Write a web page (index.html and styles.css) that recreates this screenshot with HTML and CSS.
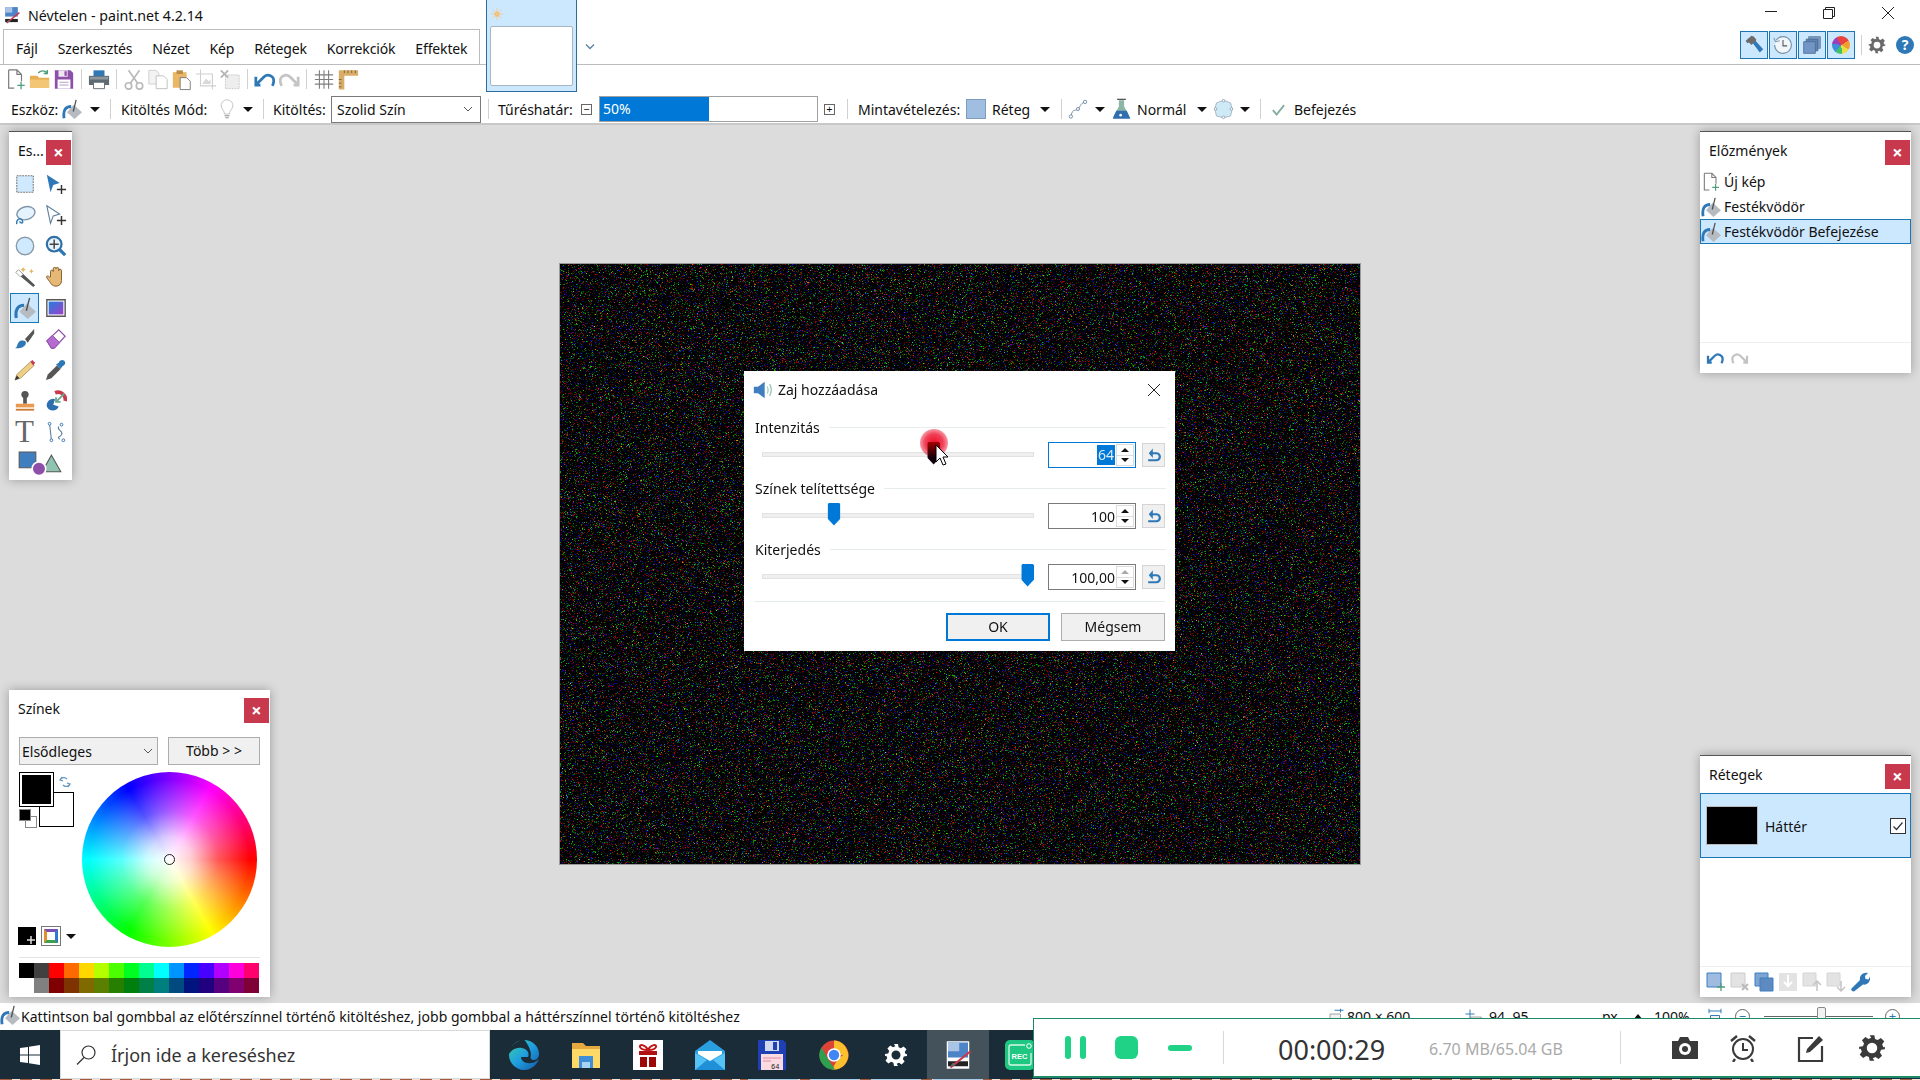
FILE: index.html
```html
<!DOCTYPE html>
<html lang="hu">
<head>
<meta charset="utf-8">
<title>Névtelen - paint.net 4.2.14</title>
<link rel="stylesheet" href="styles.css">
</head>
<body>
<svg class="defs" aria-hidden="true">
  <symbol id="i-new" viewBox="0 0 24 24"><path d="M4 1.500h9l5 5V14M13 1.500v5h5M10 21.500H4v-20" fill="#fff" stroke="#7b7b7b" stroke-width="1.300"/><path d="M17.500 14.500v8M13.500 18.500h8" stroke="#4f9d7b" stroke-width="1.400"/></symbol>
  <symbol id="i-open" viewBox="0 0 24 24"><path d="M1 8h8l2 2h11v11H1z" fill="#e8ae52"/><path d="M1 12h21v9H1z" fill="#f3c676"/><path d="M10 5c3-3 7-3 10 0M20 1.500V5.500h-4" fill="none" stroke="#4f9d7b" stroke-width="1.500"/></symbol>
  <symbol id="i-save" viewBox="0 0 24 24"><path d="M2 2h17l3 3v17H2z" fill="#8d4fa8"/><path d="M6 2h10v7H6z" fill="#efe6f3"/><path d="M12.500 3h2.500v5h-2.500z" fill="#8d4fa8"/><path d="M5 12h14v10H5z" fill="#fff"/><path d="M7 15h10M7 18h10" stroke="#b9a0c6" stroke-width="1.200"/></symbol>
  <symbol id="i-print" viewBox="0 0 24 24"><path d="M6 2h12v7H6z" fill="#2f78b7"/><path d="M1 8h22v10H1z" fill="#5f6b74"/><path d="M2 9h20v3H2z" fill="#8d979e"/><path d="M6 15h12v7H6z" fill="#fff" stroke="#5f6b74"/></symbol>
  <symbol id="i-cut" viewBox="0 0 24 24"><g fill="none" stroke="#b9b9b9" stroke-width="1.800"><circle cx="6" cy="19" r="3.500"/><circle cx="18" cy="19" r="3.500"/><path d="M8 16 18 2M16 16 6 2"/></g></symbol>
  <symbol id="i-copy" viewBox="0 0 24 24"><path d="M2 2h8l3 3v12H2z" fill="#f3f3f3" stroke="#cfcfcf"/><path d="M10 8h8l4 4v10H10z" fill="#fff" stroke="#bdbdbd"/></symbol>
  <symbol id="i-paste" viewBox="0 0 24 24"><path d="M2 4h15v17H2z" fill="#e9b765"/><path d="M6 2h7v4H6z" fill="#b98d4a"/><path d="M10 10h7l4 4v9H10z" fill="#fff" stroke="#777"/></symbol>
  <symbol id="i-crop" viewBox="0 0 24 24"><path d="M6 1v18h17M1 6h18v17" fill="none" stroke="#cfcfcf" stroke-width="1.200"/><path d="M8 17l4-6 3 3 2-2v5z" fill="#d8d8d8"/></symbol>
  <symbol id="i-desel" viewBox="0 0 24 24"><path d="M7 7h15v15H7z" fill="#eee" stroke="#c9c9c9" stroke-dasharray="2 1"/><path d="M2 2l8 8M10 2l-8 8" stroke="#b5b5b5" stroke-width="2"/></symbol>
  <symbol id="i-undo" viewBox="0 0 24 24"><path d="M7 18h-5V9M2.500 17.500 11 9c4-3.500 11-1 10.500 5-.1 1.500-.5 3-1.500 5" fill="none" stroke="#2f78b7" stroke-width="3"/></symbol>
  <symbol id="i-redo" viewBox="0 0 24 24"><path d="M17 18h5V9M21.500 17.500 13 9C9 5.500 2 8 2.500 14c.1 1.500.5 3 1.500 5" fill="none" stroke="#c4c4c4" stroke-width="3"/></symbol>
  <symbol id="i-grid" viewBox="0 0 24 24"><path d="M7 2v20M12 2v20M17 2v20M2 7h20M2 12h20M2 17h20" stroke="#7f7f7f" stroke-width="1.200"/></symbol>
  <symbol id="i-ruler" viewBox="0 0 24 24"><path d="M2 2h21v6H8v15H2z" fill="#d8ad6a"/><path d="M8 2v3M12 2v3M16 2v3M20 2v3M2 12h3M2 16h3M2 20h3" stroke="#7d6030"/></symbol>
  <symbol id="i-bucket" viewBox="0 0 24 24"><path d="M14 7l10 9-9 8-9-8z" fill="#b5bbc1"/><path d="M13.500 15 17 1" stroke="#4d4d4d" stroke-width="1.500"/><path d="M2.500 23C1 14 4 9 11 9" fill="none" stroke="#2f78b7" stroke-width="3.400"/></symbol>
  <symbol id="i-bulb" viewBox="0 0 24 24"><path d="M12 1c5 0 7 4 7 7 0 4-4 6-4 10H9c0-4-4-6-4-10 0-3 2-7 7-7z" fill="#fff" stroke="#b7b7b7"/><path d="M9 20h6M10 22.500h4" stroke="#8f8f8f" stroke-width="1.300"/></symbol>
  <symbol id="i-curve" viewBox="0 0 24 24"><path d="M4 20C5 10 10 16 13 11s3-6 7-7" fill="none" stroke="#7d94a8" stroke-width="1.200"/><g fill="#fff" stroke="#5f7f9d"><circle cx="3.500" cy="21" r="2"/><circle cx="12" cy="12" r="1.800"/><circle cx="20.500" cy="3.500" r="2"/></g></symbol>
  <symbol id="i-flask" viewBox="0 0 24 24"><path d="M9 2h6v7l7 13H2L9 9z" fill="#8cb7a6"/><path d="M6 14h12l4 9H2z" fill="#2f6fb0"/><path d="M7 1h10" stroke="#555" stroke-width="1.500"/><circle cx="11" cy="19" r="1.500" fill="#fff"/></symbol>
  <symbol id="i-blob" viewBox="0 0 24 24"><path d="M4 5 12 2l8 3 2 7-2 8-8 2-8-2-2-8z" fill="#cfeaf7" stroke="#9fb0bd"/><g fill="#fff" stroke="#8fa3b3"><circle cx="12" cy="2.500" r="1.500"/><circle cx="21" cy="12" r="1.500"/><circle cx="12" cy="21.500" r="1.500"/><circle cx="3" cy="12" r="1.500"/></g></symbol>
  <symbol id="i-check" viewBox="0 0 24 24"><path d="M3 13l6 7L21 5" fill="none" stroke="#83ab9e" stroke-width="3"/></symbol>
  <symbol id="i-hammer" viewBox="0 0 24 24"><path d="M10 9l3-3 10 11-4 4z" fill="#2f78b7"/><path d="M2 7l7-6 3 1 3 4-6 6-3-3-2 1z" fill="#6b6b6b"/></symbol>
  <symbol id="i-clock" viewBox="0 0 24 24"><path d="M4 6a10 10 0 1 1-2 6" fill="#f1f6fa" stroke="#7d94a8" stroke-width="1.500"/><path d="M1 3.500 3 8l5-1" fill="none" stroke="#7d94a8" stroke-width="1.300"/><path d="M12 6v7h5" fill="none" stroke="#555" stroke-width="1.300"/></symbol>
  <symbol id="i-layers" viewBox="0 0 24 24"><path d="M8 2h14v14H8z" fill="#7c9cc4" stroke="#5f7f9d"/><path d="M5 5h14v14H5z" fill="#5d83b5" stroke="#45698f"/><path d="M2 8h14v14H2z" fill="#7196c5" stroke="#4f6d90"/></symbol>
  <symbol id="i-gear" viewBox="0 0 24 24"><path d="M10 1h4l.6 3.200 2.300 1 2.700-1.800 2.900 2.900-1.800 2.700 1 2.300L23 11v2l-3.200.6-1 2.300 1.800 2.700-2.900 2.900-2.700-1.800-2.300 1L14 23h-4l-.6-3.200-2.300-1-2.700 1.800-2.900-2.900 1.800-2.700-1-2.300L1 13v-2l3.200-.6 1-2.300-1.800-2.700 2.900-2.900 2.700 1.800 2.300-1zM12 7.500a4.500 4.500 0 1 0 0 9 4.500 4.500 0 0 0 0-9z" fill-rule="evenodd"/></symbol>
  <symbol id="i-rect" viewBox="0 0 24 24"><path d="M3 3h18v18H3z" fill="#cfeaff" stroke="#777" stroke-dasharray="2 1" stroke-width="1.200"/></symbol>
  <symbol id="i-movepx" viewBox="0 0 24 24"><path d="M2 2l14 9-7 2-3 8z" fill="#2f78b7"/><path d="M18 13v10M13 18h10" stroke="#333" stroke-width="1.600"/></symbol>
  <symbol id="i-movesel" viewBox="0 0 24 24"><path d="M2 2l14 9-7 2-3 8z" fill="#fff" stroke="#5f7f9d" stroke-width="1.200"/><path d="M18 13v10M13 18h10" stroke="#333" stroke-width="1.600"/></symbol>
  <symbol id="i-lasso" viewBox="0 0 24 24"><ellipse cx="13" cy="10" rx="10" ry="7" fill="#e4f3fd" stroke="#7d94a8" stroke-width="1.500" transform="rotate(-15 13 10)"/><path d="M3 22c-1-5 4-8 6-4s-2 3-3 1" fill="none" stroke="#2f78b7" stroke-width="1.500"/></symbol>
  <symbol id="i-ellipse" viewBox="0 0 24 24"><circle cx="12" cy="12" r="9.500" fill="#cfeaff" stroke="#8a9aa6" stroke-width="1.500"/></symbol>
  <symbol id="i-zoom" viewBox="0 0 24 24"><path d="M15 15l7 7" stroke="#2f78b7" stroke-width="3.500"/><circle cx="10" cy="10" r="8" fill="#e4f3fd" stroke="#2f6fa5" stroke-width="2.400"/><path d="M10 5v10M5 10h10" stroke="#444" stroke-width="1.600"/></symbol>
  <symbol id="i-wand" viewBox="0 0 24 24"><path d="M2 7l3-3 18 17-2 2z" fill="#555"/><path d="M2 7l3-3 5 5-3 3z" fill="#fff" stroke="#777" stroke-width=".6"/><path d="M10 1l1 2 2 1-2 1-1 2-1-2-2-1 2-1zM19 3l.8 2 2 .8-2 .8-.8 2-.8-2-2-.8 2-.8z" fill="#e1b95f"/></symbol>
  <symbol id="i-hand" viewBox="0 0 24 24"><path d="M6 12V6a1.500 1.500 0 0 1 3 0V3a1.500 1.500 0 0 1 3 0v0a1.500 1.500 0 0 1 3 0v2a1.500 1.500 0 0 1 3 0v11c0 4-3 6-6 6-4 0-5-2-7-5l-3-4c-1-2 1-3 3-1z" fill="#e6b878" stroke="#7d5a28"/></symbol>
  <symbol id="i-grad" viewBox="0 0 24 24"><defs><linearGradient id="gr1" x1="0" x2="1" y1="0" y2="1"><stop offset="0" stop-color="#1f7fe0"/><stop offset="1" stop-color="#a03fc8"/></linearGradient></defs><path d="M2 3h20v18H2z" fill="#fff" stroke="#555" stroke-width="1.500"/><path d="M4 5h16v14H4z" fill="url(#gr1)"/></symbol>
  <symbol id="i-brush" viewBox="0 0 24 24"><path d="M12 12 22 1v5l-7 10z" fill="#555"/><path d="M1 22c3 0 2-6 6-8 3-1 6 0 6 2 0 4-6 7-12 6z" fill="#2f78b7"/></symbol>
  <symbol id="i-eraser" viewBox="0 0 24 24"><path d="M2 14 15 2l7 7-12 13H7z" fill="#fff" stroke="#8d4fa8" stroke-width="1.300"/><path d="M2 14l6-6 8 8-6 6H7z" fill="#b66bd0" stroke="#8d4fa8"/></symbol>
  <symbol id="i-pencil" viewBox="0 0 24 24"><path d="M1 23l2-6L18 3l4 4L7 21z" fill="#f0cf85" stroke="#8a7a55" stroke-width=".7"/><path d="M18 3l2-2 3 3-2 3z" fill="#c8394e"/><path d="M1 23l2-5 3 3z" fill="#333"/></symbol>
  <symbol id="i-dropper" viewBox="0 0 24 24"><path d="M1 23l2-6 10-10 4 4L7 21z" fill="#555"/><path d="M12 6l3-2c1-3 4-4 6-2s1 5-2 6l-2 3z" fill="#2f78b7"/></symbol>
  <symbol id="i-stamp" viewBox="0 0 24 24"><circle cx="12" cy="5" r="4" fill="#555"/><path d="M10 8h4v7h-4z" fill="#555"/><path d="M2 15h20v4H2z" fill="#e89a4f"/><path d="M2 20.500h20v2H2z" fill="#c97a35"/></symbol>
  <symbol id="i-recolor" viewBox="0 0 24 24"><path d="M11 3a8 8 0 0 1 11 9" fill="none" stroke="#c8394e" stroke-width="4"/><path d="M2 18a7 7 0 0 1 9-8l-2 6 6 2a7 7 0 0 1-13 0z" fill="#2f6fb0"/><path d="M21 4 12 13M12 8v5h5" fill="none" stroke="#6aa88f" stroke-width="2"/></symbol>
  <symbol id="i-line" viewBox="0 0 24 24"><path d="M5 3l2 18M15 6c-3 4 6 5 3 9s-5 1-2 5" fill="none" stroke="#5f7f9d" stroke-width="1.200"/><g fill="#fff" stroke="#2f6fb0"><circle cx="5" cy="3" r="1.500"/><circle cx="7" cy="21" r="1.500"/><circle cx="18" cy="4" r="1.500"/><circle cx="20" cy="21" r="1.500"/></g></symbol>
  <symbol id="i-shapes" viewBox="0 0 42 24"><path d="M1 1h16v15H1z" fill="#3f7fc0" stroke="#555"/><path d="M32 4l9 16H23z" fill="#8fc4b0" stroke="#555"/><circle cx="20" cy="17" r="6.500" fill="#8d4fa8" stroke="#fff" stroke-width="1.500"/></symbol>
  <symbol id="i-speaker" viewBox="0 0 24 24"><path d="M1 8h5l8-6v20l-8-6H1z" fill="#3f7fc0"/><path d="M17 8c1.500 2 1.500 6 0 8" fill="none" stroke="#9cc" stroke-width="1.500"/><path d="M20 5c2.500 4 2.500 10 0 14" fill="none" stroke="#8fc4b0" stroke-width="1.500"/></symbol>
  <symbol id="i-reset" viewBox="0 0 24 24"><path d="M2 21h14a6 6 0 0 0 0-12H8" fill="none" stroke="#2f78b7" stroke-width="3.800"/><path d="M10 1 3 9l7 8z" fill="#2f78b7"/></symbol>
  <symbol id="i-fit" viewBox="0 0 24 24"><path d="M4 1v6M20 1v6M4 4l16 0M6 10h12v12H6z" fill="#f2f2f2" stroke="#2f78b7" stroke-width="1.300"/></symbol>
  <symbol id="i-size" viewBox="0 0 24 24"><path d="M4 8h14v15H4z" fill="#f2f2f2" stroke="#888"/><path d="M10 3h12M18 1v5" stroke="#2f78b7" stroke-width="1.300"/></symbol>
  <symbol id="i-pos" viewBox="0 0 24 24"><path d="M9 12h14v12H9z" fill="#f2f2f2" stroke="#888"/><path d="M8 2v12M2 8h12" stroke="#2f78b7" stroke-width="1.300"/></symbol>
  <symbol id="i-thumbpn" viewBox="0 0 24 24"><path d="M3 1h18v22H3z" fill="#fff"/><path d="M4 2h16v12H4z" fill="#4d83c7"/><path d="M4 2h9v7H4z" fill="#a9c4e4"/><path d="M4 17h16v4H4z" fill="#222"/><path d="M6 22 22 9" stroke="#c8394e" stroke-width="1.800"/><path d="M5 22l3-4 2 2z" fill="#666"/></symbol>
</svg>

<div class="app">
  <header class="top">
    <div class="top-left">
      <div class="titlerow">
        <svg class="title-ico"><use href="#i-thumbpn"/></svg>
        <span class="title-text">Névtelen - paint.net 4.2.14</span>
      </div>
      <nav class="tab">
        <span class="menu-item">Fájl</span>
        <span class="menu-item">Szerkesztés</span>
        <span class="menu-item">Nézet</span>
        <span class="menu-item">Kép</span>
        <span class="menu-item">Rétegek</span>
        <span class="menu-item">Korrekciók</span>
        <span class="menu-item">Effektek</span>
      </nav>
    </div>
    <div class="doc-thumb">
      <svg class="doc-sun" viewBox="0 0 14 14"><circle cx="7" cy="7" r="3" fill="#f3b562"/><path d="M7 0v14M0 7h14M2 2l10 10M12 2 2 12" stroke="#f3c98c" stroke-width="1"/></svg>
      <div class="doc-page"></div>
    </div>
    <svg class="doc-chev" viewBox="0 0 10 8"><path d="M1 1.500l4 4 4-4" fill="none" stroke="#5f7f9d" stroke-width="1.300"/></svg>
    <div class="top-right">
      <div class="winctl">
        <span class="winbtn"><svg viewBox="0 0 14 14"><path d="M1 5.500h12" stroke="#222"/></svg></span>
        <span class="winbtn"><svg viewBox="0 0 14 14"><path d="M1.500 3.500h9v9h-9zM3.500 3.500v-2h9v9h-2" fill="none" stroke="#222"/></svg></span>
        <span class="winbtn"><svg viewBox="0 0 14 14"><path d="M1 1l12 12M13 1 1 13" stroke="#222"/></svg></span>
      </div>
      <div class="dockrow">
        <span class="dockbtn"><svg class="ico20"><use href="#i-hammer"/></svg></span>
        <span class="dockbtn"><svg class="ico20"><use href="#i-clock"/></svg></span>
        <span class="dockbtn"><svg class="ico20"><use href="#i-layers"/></svg></span>
        <span class="dockbtn"><span class="mini-wheel"></span></span>
        <span class="sep dock-sep"></span>
        <svg class="gear-top"><use href="#i-gear"/></svg>
        <span class="help">?</span>
      </div>
    </div>
  </header>

  <div class="tb1">
    <svg class="tbi"><use href="#i-new"/></svg>
    <svg class="tbi"><use href="#i-open"/></svg>
    <svg class="tbi"><use href="#i-save"/></svg>
    <span class="sep"></span>
    <svg class="tbi"><use href="#i-print"/></svg>
    <span class="sep"></span>
    <svg class="tbi"><use href="#i-cut"/></svg>
    <svg class="tbi"><use href="#i-copy"/></svg>
    <svg class="tbi"><use href="#i-paste"/></svg>
    <svg class="tbi"><use href="#i-crop"/></svg>
    <svg class="tbi"><use href="#i-desel"/></svg>
    <span class="sep"></span>
    <svg class="tbi"><use href="#i-undo"/></svg>
    <svg class="tbi"><use href="#i-redo"/></svg>
    <span class="sep"></span>
    <svg class="tbi"><use href="#i-grid"/></svg>
    <svg class="tbi"><use href="#i-ruler"/></svg>
  </div>

  <div class="tb2">
    <span class="lb w51">Eszköz:</span>
    <svg class="opt"><use href="#i-bucket"/></svg>
    <span class="caret c8"></span>
    <span class="sep s10"></span>
    <span class="lb w96">Kitöltés Mód:</span>
    <svg class="opt"><use href="#i-bulb"/></svg>
    <span class="caret c6"></span>
    <span class="sep s9"></span>
    <span class="lb w58">Kitöltés:</span>
    <span class="combo">Szolid Szín<svg class="chev" viewBox="0 0 10 6"><path d="M1 1l4 4 4-4" fill="none" stroke="#555"/></svg></span>
    <span class="sep s7"></span>
    <span class="lb w83">Tűréshatár:</span>
    <span class="pm">−</span>
    <span class="tol"><span class="tol-fill">50%</span></span>
    <span class="pm pm2">+</span>
    <span class="sep s12"></span>
    <span class="lb w108">Mintavételezés:</span>
    <span class="swatch"></span>
    <span class="lb w45">Réteg</span>
    <span class="caret c3"></span>
    <span class="sep s11"></span>
    <svg class="opt"><use href="#i-curve"/></svg>
    <span class="caret c7"></span>
    <svg class="opt o6"><use href="#i-flask"/></svg>
    <span class="lb w57">Normál</span>
    <span class="caret c3"></span>
    <svg class="opt o6"><use href="#i-blob"/></svg>
    <span class="caret c1"></span>
    <span class="sep s10"></span>
    <svg class="chk"><use href="#i-check"/></svg>
    <span class="lb">Befejezés</span>
  </div>

  <main class="workspace">
    <canvas id="noise" class="doc" width="800" height="600"></canvas>

    <section class="win win-tools">
      <div class="win-head"><span class="win-title">Es...</span><span class="x">×</span></div>
      <div class="tools">
        <span class="tool"><svg class="ti"><use href="#i-rect"/></svg></span>
        <span class="tool"><svg class="ti"><use href="#i-movepx"/></svg></span>
        <span class="tool"><svg class="ti"><use href="#i-lasso"/></svg></span>
        <span class="tool"><svg class="ti"><use href="#i-movesel"/></svg></span>
        <span class="tool"><svg class="ti"><use href="#i-ellipse"/></svg></span>
        <span class="tool"><svg class="ti"><use href="#i-zoom"/></svg></span>
        <span class="tool"><svg class="ti"><use href="#i-wand"/></svg></span>
        <span class="tool"><svg class="ti"><use href="#i-hand"/></svg></span>
        <span class="tool tool-on"><svg class="ti"><use href="#i-bucket"/></svg></span>
        <span class="tool"><svg class="ti"><use href="#i-grad"/></svg></span>
        <span class="tool"><svg class="ti"><use href="#i-brush"/></svg></span>
        <span class="tool"><svg class="ti"><use href="#i-eraser"/></svg></span>
        <span class="tool"><svg class="ti"><use href="#i-pencil"/></svg></span>
        <span class="tool"><svg class="ti"><use href="#i-dropper"/></svg></span>
        <span class="tool"><svg class="ti"><use href="#i-stamp"/></svg></span>
        <span class="tool"><svg class="ti"><use href="#i-recolor"/></svg></span>
        <span class="tool tool-t">T</span>
        <span class="tool"><svg class="ti"><use href="#i-line"/></svg></span>
        <span class="tool tool-wide"><svg class="ti-wide"><use href="#i-shapes"/></svg></span>
      </div>
    </section>

    <section class="win win-colors">
      <div class="win-head head-c"><span class="win-title">Színek</span><span class="x">×</span></div>
      <div class="col-ctl">
        <span class="col-combo">Elsődleges<svg class="chev" viewBox="0 0 10 6"><path d="M1 1l4 4 4-4" fill="none" stroke="#555"/></svg></span>
        <span class="col-more">Több &gt; &gt;</span>
      </div>
      <div class="col-body">
        <div class="col-left">
          <div class="sw-stack">
            <span class="sw-bg"></span>
            <span class="sw-fg"></span>
            <svg class="sw-swap" viewBox="0 0 12 12"><path d="M1 4c2-3 5-3 7-1M3 1 1 4l3 1M11 8c-2 3-5 3-7 1M9 11l2-3-3-1" fill="none" stroke="#5f93bd" stroke-width="1.300"/></svg>
            <span class="sw-r1"></span>
            <span class="sw-r2"></span>
          </div>
          <div class="col-tools">
            <span class="add-col"><svg viewBox="0 0 10 10"><path d="M5 1v8M1 5h8" stroke="#ddd" stroke-width="1.500"/></svg></span>
            <span class="pal-btn"><span class="pal-in"></span></span>
            <span class="caret"></span>
          </div>
        </div>
        <div class="wheel"><span class="wheel-cur"></span></div>
      </div>
      <div class="palette">
        <i style="background:#000"></i><i style="background:#404040"></i><i style="background:#f00"></i><i style="background:#ff6a00"></i><i style="background:#ffd800"></i><i style="background:#b6ff00"></i><i style="background:#4cff00"></i><i style="background:#00ff21"></i><i style="background:#00ff90"></i><i style="background:#0ff"></i><i style="background:#0094ff"></i><i style="background:#0026ff"></i><i style="background:#4800ff"></i><i style="background:#b200ff"></i><i style="background:#ff00dc"></i><i style="background:#ff006e"></i>
        <i style="background:#fff"></i><i style="background:#808080"></i><i style="background:#7f0000"></i><i style="background:#7f3300"></i><i style="background:#7f6a00"></i><i style="background:#5b7f00"></i><i style="background:#267f00"></i><i style="background:#007f0e"></i><i style="background:#007f46"></i><i style="background:#007f7f"></i><i style="background:#004a7f"></i><i style="background:#00137f"></i><i style="background:#21007f"></i><i style="background:#57007f"></i><i style="background:#7f006e"></i><i style="background:#7f0037"></i>
      </div>
    </section>

    <section class="win win-hist">
      <div class="win-head head-r"><span class="win-title">Előzmények</span><span class="x">×</span></div>
      <div class="list">
        <div class="hrow"><svg class="hi"><use href="#i-new"/></svg>Új kép</div>
        <div class="hrow"><svg class="hi"><use href="#i-bucket"/></svg>Festékvödör</div>
        <div class="hrow hrow-on"><svg class="hi"><use href="#i-bucket"/></svg>Festékvödör Befejezése</div>
      </div>
      <div class="foot">
        <svg class="fi"><use href="#i-undo"/></svg>
        <svg class="fi"><use href="#i-redo"/></svg>
      </div>
    </section>

    <section class="win win-layers">
      <div class="win-head head-r"><span class="win-title">Rétegek</span><span class="x">×</span></div>
      <div class="list">
        <div class="lrow"><span class="lthumb"></span><span class="lname">Háttér</span>
          <span class="lchk"><svg viewBox="0 0 14 14"><path d="M2.500 7.500l3 3 6-7" fill="none" stroke="#333" stroke-width="1.200"/></svg></span></div>
      </div>
      <div class="foot foot-l">
        <svg class="fl" viewBox="0 0 20 20"><path d="M1 1h14v14H1z" fill="#9fbbdf" stroke="#3f7fc0"/><path d="M15 11v8M11 15h8" stroke="#4f9d7b" stroke-width="1.300"/></svg>
        <svg class="fl" viewBox="0 0 20 20"><path d="M1 1h14v14H1z" fill="#e3e3e3" stroke="#ccc"/><path d="M12 12l6 6M18 12l-6 6" stroke="#bbb" stroke-width="2"/></svg>
        <svg class="fl" viewBox="0 0 20 20"><path d="M1 1h13v13H1z" fill="#7ea4d2" stroke="#3f7fc0"/><path d="M6 6h13v13H6z" fill="#5d8ac0" stroke="#3f7fc0"/></svg>
        <svg class="fl" viewBox="0 0 20 20"><path d="M1 1h18v18H1z" fill="#e3e3e3"/><path d="M10 3v11M6 10l4 4 4-4" fill="none" stroke="#fff" stroke-width="2"/></svg>
        <svg class="fl" viewBox="0 0 20 20"><path d="M1 1h13v13H1z" fill="#e3e3e3" stroke="#d5d5d5"/><path d="M15 19V10M11 13l4-4 4 4" fill="none" stroke="#c4c4c4" stroke-width="1.500"/></svg>
        <svg class="fl" viewBox="0 0 20 20"><path d="M1 1h13v13H1z" fill="#e3e3e3" stroke="#d5d5d5"/><path d="M15 9v9M11 15l4 4 4-4" fill="none" stroke="#c4c4c4" stroke-width="1.500"/></svg>
        <svg class="fl" viewBox="0 0 20 20"><path d="M2 19l-1-2 9-9c-1-4 3-8 8-7l-3 3 .5 3 3 .5 1.500-3c1 5-3 9-7 8l-9 7z" fill="#2f78b7"/></svg>
      </div>
    </section>

    <section class="dialog">
      <div class="dlg-head">
        <svg class="dlg-ico"><use href="#i-speaker"/></svg>
        <span class="dlg-title">Zaj hozzáadása</span>
        <svg class="dlg-x" viewBox="0 0 12 12"><path d="M0 0l12 12M12 0 0 12" stroke="#222"/></svg>
      </div>

      <div class="grp">
        <div class="grp-label"><span>Intenzitás</span></div>
        <div class="grp-ctl">
          <div class="track">
            <span class="thumb thumb-hot" style="left:63.2%"></span>
            <span class="glow" style="left:63.2%"></span>
            <svg class="cursor" viewBox="0 0 14 22"><path d="M1 1v17l4-4 3 7 3-1-3-7h5z" fill="#fff" stroke="#000"/></svg>
          </div>
          <div class="spin spin-on"><span class="val sel">64</span><span class="arrows"><b class="up"></b><b class="dn"></b></span></div>
          <span class="reset"><svg><use href="#i-reset"/></svg></span>
        </div>
      </div>

      <div class="grp">
        <div class="grp-label"><span>Színek telítettsége</span></div>
        <div class="grp-ctl">
          <div class="track"><span class="thumb" style="left:26.3%"></span></div>
          <div class="spin"><span class="val">100</span><span class="arrows"><b class="up"></b><b class="dn"></b></span></div>
          <span class="reset"><svg><use href="#i-reset"/></svg></span>
        </div>
      </div>

      <div class="grp">
        <div class="grp-label"><span>Kiterjedés</span></div>
        <div class="grp-ctl">
          <div class="track"><span class="thumb" style="left:98%"></span></div>
          <div class="spin"><span class="val">100,00</span><span class="arrows"><b class="up up-off"></b><b class="dn"></b></span></div>
          <span class="reset"><svg><use href="#i-reset"/></svg></span>
        </div>
      </div>

      <div class="dlg-foot">
        <span class="btn btn-ok">OK</span>
        <span class="btn">Mégsem</span>
      </div>
    </section>
  </main>

  <footer class="status">
    <svg class="st-ico"><use href="#i-bucket"/></svg>
    <span class="st-text">Kattintson bal gombbal az előtérszínnel történő kitöltéshez, jobb gombbal a háttérszínnel történő kitöltéshez</span>
    <div class="st-right">
      <svg class="st-i"><use href="#i-size"/></svg><span class="st-v w-size">800 × 600</span>
      <svg class="st-i"><use href="#i-pos"/></svg><span class="st-v w-pos">94, 95</span>
      <span class="st-v w-px">px</span><span class="st-up"></span><span class="st-v w-pct">100%</span>
      <svg class="st-i"><use href="#i-fit"/></svg>
      <span class="zm">−</span>
      <span class="zslider"><span class="zthumb"></span></span>
      <span class="zm">+</span>
    </div>
  </footer>

  <div class="taskbar">
    <span class="start"><svg viewBox="0 0 20 20"><path d="M0 3l8-1v7.500H0zM9 1.800 20 0v9.500H9zM0 10.500h8V18l-8-1zM9 10.500h11V20L9 18.200z" fill="#fff"/></svg></span>
    <div class="search">
      <svg viewBox="0 0 20 20"><circle cx="12.500" cy="7.500" r="6.500" fill="none" stroke="#333" stroke-width="1.200"/><path d="M8 12.500 1 19.500" stroke="#333" stroke-width="1.300"/></svg>
      <span>Írjon ide a kereséshez</span>
    </div>
    <div class="apps">
      <span class="app-cell"><svg viewBox="0 0 30 30"><defs><linearGradient id="edg" x1="0" x2="1" y1="0" y2="1"><stop offset="0" stop-color="#3ad0a0"/><stop offset=".5" stop-color="#1f9fe0"/><stop offset="1" stop-color="#1359a8"/></linearGradient></defs><path d="M15 0C7 0 1 6 0 14c3-5 8-7 13-6 5 1 8 5 6 9h-7c0 4 5 7 10 6 3 0 6-2 8-4-2 5-7 11-15 11C7 30 0 23 0 15 0 7 7 0 15 0c8 0 15 6 15 14 0 3-2 6-5 6-3 0-4-2-3-5 0-7-6-15-7-15z" fill="url(#edg)"/></svg></span>
      <span class="app-cell"><svg viewBox="0 0 30 30"><path d="M1 3h11l3 3h14v22H1z" fill="#e5a93f"/><path d="M1 9h28v19H1z" fill="#ffd968"/><path d="M8 16h14v12H8z" fill="#3f8ed8"/><path d="M11 22h8v6h-8z" fill="#a9d3f5"/></svg></span>
      <span class="app-cell"><svg viewBox="0 0 30 30"><path d="M0 0h30v30H0z" fill="#fff"/><path d="M6 11h18v4H6z" fill="#b01212"/><path d="M7 17h7v10H7zM16 17h7v10h-7z" fill="#9c0808"/><path d="M15 10c-3-6-9-6-8-3s5 3 8 3c3 0 7 0 8-3s-5-3-8 3z" fill="none" stroke="#c01818" stroke-width="2"/></svg></span>
      <span class="app-cell"><svg viewBox="0 0 30 30"><path d="M0 11 15 0l15 11v19H0z" fill="#2a9fe0"/><path d="M3 11h24v3L15 21 3 14z" fill="#fff"/><path d="M0 13l15 9 15-9v17H0z" fill="#55c3f5"/><path d="M0 30l12-10 3 2 3-2 12 10z" fill="#1f8fd8"/></svg></span>
      <span class="app-cell"><svg viewBox="0 0 30 30"><path d="M1 0h25l3 3v27H1z" fill="#1f3fb5"/><path d="M8 1h14v10H8z" fill="#cfd8ee"/><path d="M16 2h4v8h-4z" fill="#1f3fb5"/><path d="M4 14h22v16H4z" fill="#fbdbe2"/><path d="M6 18h18M6 21h8" stroke="#e58aa0"/><text x="14" y="29" font-size="7" font-family="Liberation Mono" fill="#222">64</text></svg></span>
      <span class="app-cell"><svg viewBox="0 0 30 30"><circle cx="15" cy="15" r="14.500" fill="#db4437"/><path d="M15 .5A14.500 14.500 0 0 1 29 15H15z" fill="#fbc02d"/><path d="M29 12A14.500 14.500 0 0 1 13 29.500l6-11z" fill="#fbc02d"/><path d="M2.500 7.500 9 19l7 10.500A14.500 14.500 0 0 1 2.500 7.500z" fill="#2e9e4f"/><circle cx="15" cy="15" r="6.800" fill="#fff"/><circle cx="15" cy="15" r="5.200" fill="#4285f4"/></svg></span>
      <span class="app-cell"><svg class="app-gear"><use href="#i-gear"/></svg></span>
      <span class="app-cell app-on"><svg><use href="#i-thumbpn"/></svg></span>
      <span class="app-cell"><svg viewBox="0 0 30 30"><rect width="30" height="30" rx="5" fill="#1fc882"/><path d="M20 5H6a2 2 0 0 0-2 2v16a2 2 0 0 0 2 2h18a2 2 0 0 0 2-2V13" fill="none" stroke="#d7f7e8" stroke-width="1.300"/><circle cx="24" cy="6" r="2.300" fill="none" stroke="#fff"/><text x="6.500" y="19" font-size="7.500" font-weight="700" font-family="Liberation Sans" fill="#fff">REC</text></svg></span>
    </div>
  </div>
  <div class="strip"><span class="lit l1"></span><span class="lit l2"></span><span class="lit l3"></span><span class="lit l4"></span></div>

  <aside class="recorder">
    <span class="rbar"></span><span class="rbar rbar2"></span>
    <span class="rstop"></span>
    <span class="rmin"></span>
    <span class="rsep"></span>
    <span class="rtime">00:00:29</span>
    <span class="rsize">6.70 MB/65.04 GB</span>
    <span class="rsep rsep2"></span>
    <svg class="ric" viewBox="0 0 28 28"><path d="M1 7h6l2-4h8l2 4h8v18H1z" fill="#3a3a3a"/><circle cx="14" cy="15" r="6" fill="#fff"/><circle cx="14" cy="15" r="3" fill="#3a3a3a"/></svg>
    <svg class="ric r2" viewBox="0 0 28 28"><circle cx="14" cy="15" r="10" fill="none" stroke="#3a3a3a" stroke-width="2"/><path d="M14 9v7h5" fill="none" stroke="#3a3a3a" stroke-width="2"/><path d="M2 7l6-5M26 7l-6-5M6 25l-2 3M22 25l2 3" stroke="#3a3a3a" stroke-width="2.400"/></svg>
    <svg class="ric r3" viewBox="0 0 28 28"><path d="M16 4H2v23h23V12" fill="none" stroke="#3a3a3a" stroke-width="2.200"/><path d="M10 15 22 2l4 4-13 12-4 1z" fill="#3a3a3a"/></svg>
    <svg class="ric r4"><use href="#i-gear"/></svg>
  </aside>
</div>
<script src="noise.js"></script>
</body>
</html>
```

FILE: styles.css
```css
* { box-sizing: border-box; }
html, body { margin: 0; padding: 0; }
body { font-family: "Noto Sans", "Open Sans", sans-serif; font-size: 14px; color: #111; background: #fff; }
.defs { position: absolute; width: 0; height: 0; }
svg { display: block; flex: none; }

.app { position: relative; width: 1920px; height: 1080px; display: flex; flex-direction: column; overflow: hidden; background: #fff; }

/* top */
.top { display: flex; height: 65px; flex: none; border-bottom: 1px solid #bcbcbc; }
.top-left { width: 480px; display: flex; flex-direction: column; }
.titlerow { height: 29px; display: flex; align-items: center; padding: 2px 0 0 2px; gap: 7px; }
.title-ico { width: 19px; height: 22px; }
.title-text { font-size: 14.2px; }
.tab { position: relative; z-index: 2; height: 36px; margin-left: 3px; padding: 3px 0 0 2px; background: #fff; border: 1px solid #bcbcbc; border-bottom: 0; display: flex; align-items: center; }
.menu-item { padding: 0 10px; letter-spacing: -.15px; }
.doc-thumb { position: relative; z-index: 3; width: 91px; height: 92px; margin-left: 6px; flex: none; background: #cce8ff; border: 1px solid #2b6e9e; border-top: 0; padding: 8px 3px 0; }
.doc-sun { width: 12px; height: 12px; margin-left: 1px; }
.doc-page { height: 60px; margin-top: 6px; background: #fff; border: 1px solid #a9b6c0; border-radius: 2px; }
.doc-chev { width: 10px; height: 8px; margin: 43px 0 0 8px; }
.top-right { margin-left: auto; padding-right: 3px; display: flex; flex-direction: column; }
.winctl { height: 29px; display: flex; justify-content: flex-end; }
.winbtn { width: 58.5px; display: flex; align-items: center; justify-content: center; padding-bottom: 3px; }
.winbtn svg { width: 14px; height: 14px; }
.dockrow { display: flex; align-items: center; gap: 1px; margin-top: 2px; height: 28px; padding-right: 3px; justify-content: flex-end; }
.dockbtn { width: 28px; height: 28px; background: #cce8ff; border: 1px solid #1a76b4; display: flex; align-items: center; justify-content: center; }
.ico20 { width: 20px; height: 20px; }
.mini-wheel { width: 18px; height: 18px; border-radius: 50%; background: conic-gradient(#e8433f 0 60deg, #f0a030 60deg 120deg, #e8e040 120deg 170deg, #40c070 170deg 220deg, #3f8ed8 220deg 280deg, #9a3fc0 280deg 330deg, #e8433f 330deg); }
.dock-sep { margin: 0 7px 0 1px; height: 23px; }
.gear-top { width: 18px; height: 18px; fill: #6a6a6a; margin-right: 9px; }
.help { width: 18px; height: 18px; border-radius: 50%; background: #2f78b7; color: #fff; font-weight: 700; font-size: 14px; line-height: 18px; text-align: center; }

/* toolbars */
.sep { display: block; flex: none; width: 1px; height: 20px; background: #d0d0d0; margin: 0 5px; }
.tb1 { height: 28px; flex: none; display: flex; align-items: center; padding-left: 4px; }
.tbi { width: 24px; height: 23px; padding: 0 1px; }
.tb2 { height: 32px; flex: none; display: flex; align-items: center; padding: 2px 0 0 11px; border-bottom: 2px solid #c8c8c8; }
.lb { flex: none; white-space: nowrap; }
.opt { width: 20px; height: 22px; }
.caret { width: 0; height: 0; border: 5px solid transparent; border-top: 5px solid #111; border-bottom: 0; flex: none; }
.c8 { margin-left: 8px; }
.c7 { margin-left: 7px; }
.c6 { margin-left: 6px; }
.c3 { margin-left: 3px; }
.c1 { margin-left: 1px; }
.s10 { margin: 0 10px; }
.s9 { margin: 0 9px 0 10px; }
.s7 { margin: 0 9px 0 7px; }
.s12 { margin: 0 10px 0 12px; }
.s11 { margin: 0 6px 0 11px; }
.o6 { margin-left: 6px; margin-right: 5px; width: 21px; }
.w51 { width: 51px; }
.w96 { width: 96px; }
.w58 { width: 58px; }
.w83 { width: 83px; }
.w108 { width: 108px; }
.w45 { width: 45px; margin-left: 6px; }
.w57 { width: 57px; }
.combo { width: 150px; height: 27px; border: 1px solid #7a7a7a; padding: 0 5px; display: flex; align-items: center; justify-content: space-between; }
.chev { width: 10px; height: 6px; margin-right: 2px; }
.pm { width: 11px; height: 11px; border: 1px solid #666; font-size: 11px; line-height: 8px; text-align: center; flex: none; margin-right: 7px; }
.pm2 { margin: 0 0 0 6px; }
.tol { width: 219px; height: 26px; border: 1px solid #a0a0a0; flex: none; background: #fff; }
.tol-fill { display: block; width: 109px; height: 100%; background: #0078d7; color: #fff; padding-left: 3px; line-height: 24px; }
.swatch { width: 20px; height: 20px; background: #a0bfe0; border: 1px solid #7d9cc0; flex: none; }
.chk { width: 15px; height: 15px; margin-right: 8px; }

/* workspace */
.workspace { position: relative; flex: 1; background: #dcdcdc; display: flex; align-items: center; justify-content: center; min-height: 0; }
.doc { display: block; width: 800px; height: 600px; outline: 1px solid #999; background: #000; }

.win { position: absolute; background: #fff; box-shadow: 0 0 10px rgba(0,0,0,.3); display: flex; flex-direction: column; }
.win-tools { left: 9px; top: 6px; width: 63px; height: 349px; border-top: 1px solid #555; }
.win-colors { left: 9px; top: 565px; width: 261px; height: 307px; }
.win-hist { left: 1700px; top: 6px; width: 211px; height: 242px; border-top: 1px solid #555; }
.win-layers { left: 1700px; top: 630px; width: 211px; height: 242px; border-top: 1px solid #555; }
.win-head { height: 36px; flex: none; display: flex; align-items: flex-start; justify-content: space-between; padding: 8px 1px 0 9px; }
.head-c { height: 47px; }
.head-r { height: 37px; }
.win-title { line-height: 24px; font-size: 14px; margin-top: -1px; }
.x { width: 25px; height: 25px; background: #c8394e; color: #fff; font-weight: 700; font-size: 18px; line-height: 24px; text-align: center; flex: none; }

.tools { display: grid; grid-template-columns: 31px 31px; grid-auto-rows: 31px; }
.tool { display: flex; align-items: center; justify-content: center; }
.tool-on { background: #cce8ff; border: 1px solid #1a76b4; margin: 1px 1px 0 1px; }
.ti { width: 22px; height: 22px; }
.tool-t { font-family: "Liberation Serif", serif; font-size: 31px; color: #666; }
.tool-wide { grid-column: 1 / 3; padding-top: 1px; }
.ti-wide { width: 44px; height: 25px; }

.col-ctl { display: flex; gap: 10px; padding: 0 10px; flex: none; }
.col-combo { width: 139px; height: 28px; border: 1px solid #adadad; background: #f0f0f0; display: flex; align-items: center; justify-content: space-between; padding: 0 2px; }
.col-more { width: 92px; height: 28px; border: 1px solid #adadad; background: #f0f0f0; line-height: 26px; text-align: center; }
.col-body { display: flex; margin-top: 7px; padding-left: 10px; flex: none; }
.col-left { width: 63px; height: 175px; display: flex; flex-direction: column; justify-content: space-between; }
.sw-stack { position: relative; width: 56px; height: 56px; }
.sw-bg { position: absolute; left: 20px; top: 20px; width: 35px; height: 35px; background: #fff; border: 1px solid #000; }
.sw-fg { position: absolute; left: 0; top: 0; width: 35px; height: 35px; background: #000; border: 1px solid #000; box-shadow: inset 0 0 0 2px #fff; }
.sw-swap { position: absolute; left: 40px; top: 4px; width: 12px; height: 12px; }
.sw-r2 { position: absolute; left: 6px; top: 44px; width: 12px; height: 12px; background: #fff; border: 1px solid #888; }
.sw-r1 { position: absolute; left: 0; top: 37px; width: 12px; height: 12px; background: #000; border: 1px solid #888; z-index: 1; }
.col-tools { display: flex; align-items: center; gap: 5px; margin-left: -1px; padding-bottom: 1px; }
.add-col { width: 18px; height: 18px; background: #000; display: flex; align-items: flex-end; justify-content: flex-end; }
.add-col svg { width: 10px; height: 10px; }
.pal-btn { width: 20px; height: 20px; border: 1px solid #777; padding: 2px; background: #fff; }
.pal-in { display: block; width: 14px; height: 14px; border: 3px solid; border-color: #7a4fb0 #2f78d0 #3fa050 #e0902f; background: #fff; }
.wheel { position: relative; width: 175px; height: 175px; border-radius: 50%; background: radial-gradient(circle closest-side, #fff 0, rgba(255,255,255,.8) 25%, rgba(255,255,255,.35) 55%, rgba(255,255,255,0) 92%), conic-gradient(from 90deg, #f00, #ff0 60deg, #0f0 120deg, #0ff 180deg, #00f 240deg, #f0f 300deg, #f00 360deg); }
.wheel-cur { position: absolute; left: 50%; top: 50%; width: 11px; height: 11px; margin: -6px 0 0 -6px; border: 1px solid #222; border-radius: 50%; }
.palette { margin: 10px 10px 0; padding-top: 5px; border-top: 1px solid #e4e4e4; display: grid; grid-template-columns: repeat(16, 15px); grid-auto-rows: 15px; }
.palette i { display: block; }

.list { flex: 1; min-height: 0; }
.hrow { height: 25px; display: flex; align-items: center; padding-left: 1px; gap: 3px; }
.hi { width: 20px; height: 22px; }
.hrow-on { background: #cce8ff; border: 1px solid #1a76b4; padding-left: 0; }
.foot { height: 31px; flex: none; border-top: 1px solid #eee; display: flex; align-items: center; padding-left: 5px; gap: 3px; }
.fi { width: 21px; height: 18px; }
.foot-l { gap: 4px; padding-left: 6px; }
.fl { width: 20px; height: 20px; }
.lrow { height: 65px; background: #cce8ff; border: 1px solid #1a76b4; display: flex; align-items: center; padding: 0 4px 0 5px; }
.lthumb { width: 52px; height: 39px; background: #000; border: 1px solid #bbb; flex: none; }
.lname { margin: 2px 0 0 7px; }
.lchk { width: 16px; height: 16px; margin-left: auto; border: 1px solid #333; background: #fff; }
.lchk svg { width: 14px; height: 14px; }

/* dialog */
.dialog { position: absolute; left: 744px; top: 246px; width: 431px; height: 280px; background: #fff; padding: 0 9px 0 10px; box-shadow: 0 0 6px rgba(0,0,0,.4); }
.dlg-head { height: 46px; display: flex; align-items: center; padding-bottom: 9px; }
.dlg-ico { width: 20px; height: 20px; margin-left: -1px; }
.dlg-title { margin-left: 5px; }
.dlg-x { width: 12px; height: 12px; margin: 0 6px 0 auto; }
.grp { margin-bottom: 10px; }
.grp-label { height: 22px; display: flex; align-items: center; padding: 0 0 2px 1px; gap: 9px; }
.grp-label::after { content: ""; flex: 1; height: 1px; background: #e6ecec; }
.grp-ctl { display: flex; align-items: center; margin-top: 3px; height: 26px; padding-left: 8px; }
.track { position: relative; width: 272px; height: 5px; margin: -2px 14px 0 0; background: #efefef; border: 1px solid #e2e2e2; flex: none; }
.thumb { position: absolute; top: -11px; width: 13px; height: 23px; transform: translateX(-50%); background: #0078d7; clip-path: polygon(15% 0, 85% 0, 100% 8%, 100% 70%, 50% 100%, 0 70%, 0 8%); }
.thumb-hot { background: linear-gradient(#b00010, #10000a 70%); }
.glow { position: absolute; top: -24px; width: 28px; height: 28px; margin-left: -14px; border-radius: 50%; background: radial-gradient(circle, rgba(235,0,30,.95) 0, rgba(235,0,30,.75) 45%, rgba(235,0,30,0) 100%); mix-blend-mode: multiply; }
.cursor { position: absolute; left: 63.7%; top: -9px; width: 14px; height: 22px; }
.spin { width: 88px; height: 26px; border: 1px solid #7a7a7a; flex: none; display: flex; align-items: center; justify-content: flex-end; padding-right: 1px; }
.spin-on { border-color: #0078d7; }
.val { margin-right: 1px; }
.sel { background: #0078d7; color: #dcecfa; height: 20px; line-height: 19px; padding: 0 1px; }
.arrows { width: 18px; height: 22px; border: 1px solid #dcdcdc; display: flex; flex-direction: column; }
.arrows b { flex: 1; display: flex; align-items: center; justify-content: center; }
.arrows b::after { content: ""; border: 4px solid transparent; }
.up::after { border-bottom-color: #111 !important; border-top: 0 !important; }
.dn::after { border-top-color: #111 !important; border-bottom: 0 !important; }
.up-off::after { border-bottom-color: #aaa !important; }
.up { border-bottom: 1px solid #dcdcdc; }
.reset { width: 23px; height: 24px; margin-left: 6px; border: 1px solid #d5d5d5; background: #f0f0f0; display: flex; align-items: center; justify-content: center; flex: none; }
.reset svg { width: 14px; height: 14px; }
.dlg-foot { margin-top: 11px; border-top: 1px solid #e6ecec; padding-top: 11px; display: flex; justify-content: flex-end; gap: 11px; margin-right: 1px; }
.btn { width: 104px; height: 28px; border: 1px solid #adadad; background: #f0f0f0; line-height: 26px; text-align: center; }
.btn-ok { border: 2px solid #0078d7; line-height: 24px; }

/* status */
.status { height: 27px; flex: none; display: flex; align-items: center; background: #fff; }
.st-ico { width: 20px; height: 22px; margin-top: -4px; }
.st-text { margin-left: 1px; white-space: nowrap; letter-spacing: .03px; }
.st-right { margin-left: auto; display: flex; align-items: center; padding-right: 20px; }
.st-i { width: 18px; height: 18px; }
.st-v { white-space: nowrap; flex: none; }
.w-size { width: 119px; padding-left: 2px; }
.w-pos { width: 120px; padding-left: 7px; }
.w-px { width: 31px; }
.st-up { width: 0; height: 0; border: 5px solid transparent; border-bottom: 6px solid #111; border-top: 0; margin-right: 11px; flex: none; }
.w-pct { width: 52px; }
.zm { width: 15px; height: 15px; border: 1px solid #666; border-radius: 50%; font-size: 13px; line-height: 12px; text-align: center; flex: none; color: #2f78b7; margin-left: 11px; }
.zslider { position: relative; width: 109px; height: 1px; background: #666; margin: 0 1px 0 14px; flex: none; }
.zthumb { position: absolute; left: 53px; top: -9px; width: 9px; height: 18px; background: #f2f2f2; border: 1px solid #888; border-radius: 2px; }

/* taskbar */
.taskbar { height: 49px; flex: none; display: flex; background: #1a2c37; }
.start { width: 60px; display: flex; align-items: center; justify-content: center; }
.start svg { width: 20px; height: 20px; }
.search { width: 430px; background: #fff; display: flex; align-items: center; padding-left: 15px; gap: 15px; border: 1px solid #d8d8d8; }
.search svg { width: 20px; height: 20px; }
.search span { font-size: 18px; color: #333; white-space: nowrap; }
.apps { display: flex; margin-left: 3px; }
.app-cell { width: 62px; height: 49px; display: flex; align-items: center; justify-content: center; }
.app-cell svg { width: 30px; height: 30px; }
.app-gear { fill: #fff; width: 24px !important; height: 24px !important; }
.app-on { background: #44525b; }
.strip { position: relative; height: 1px; flex: none; background: repeating-linear-gradient(90deg, #a5593a 0 12px, #f3e3d8 12px 20px); }
.lit { position: absolute; top: 0; height: 1px; background: #a9cfe8; width: 50px; }
.l1 { left: 748px; }
.l2 { left: 810px; }
.l3 { left: 871px; }
.l4 { left: 933px; }

/* recorder */
.recorder { position: absolute; left: 1033px; top: 1018px; width: 887px; height: 60px; background: #fff; border-top: 1px solid #1f8a6a; border-bottom: 2px solid #1f8a6a; border-left: 1px solid #1f8a6a; display: flex; align-items: center; }
.rbar { width: 6px; height: 23px; border-radius: 3px; background: #1fd286; margin-left: 31px; flex: none; }
.rbar2 { margin-left: 9px; }
.rstop { width: 23px; height: 23px; border-radius: 6px; background: #1fd286; margin-left: 29px; flex: none; }
.rmin { width: 24px; height: 6px; border-radius: 3px; background: #1fd286; margin-left: 30px; flex: none; }
.rsep { width: 1px; height: 33px; background: #d8d8d8; margin-left: 31px; flex: none; }
.rtime { width: 151px; margin: 3px 0 0 54px; font-size: 27px; color: #333; white-space: nowrap; }
.rsize { width: 191px; margin-top: 3px; font-size: 16px; color: #aaa; white-space: nowrap; }
.rsep2 { margin-left: 0; }
.ric { width: 28px; height: 28px; margin-left: 50px; fill: #3a3a3a; }
.r2 { margin-left: 30px; }
.r3 { margin-left: 40px; }
.r4 { margin-left: 33px; }
```

FILE: noise.js
```js
(function () {
  var c = document.getElementById('noise');
  var ctx = c.getContext('2d');
  var img = ctx.createImageData(800, 600);
  var d = img.data;
  var s = 12345;
  function r() {
    s = (s * 1664525 + 1013904223) >>> 0;
    return ((s >>> 8) & 65535) / 65536;
  }
  function ch() {
    return r() < 0.72 ? 0 : Math.floor(30 + r() * r() * 205);
  }
  for (var i = 0; i < d.length; i += 4) {
    var on = r() < 0.52;
    d[i] = on ? ch() : 0;
    d[i + 1] = on ? ch() : 0;
    d[i + 2] = on ? ch() : 0;
    d[i + 3] = 255;
  }
  ctx.putImageData(img, 0, 0);
})();
```
